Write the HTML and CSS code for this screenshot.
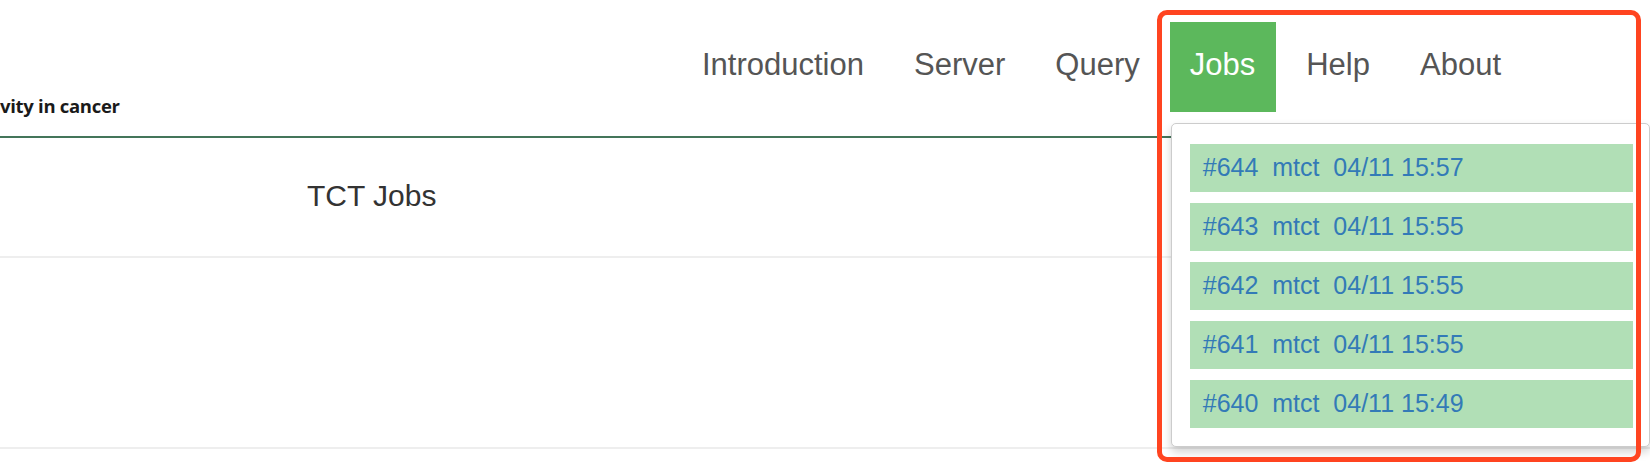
FILE: index.html
```html
<!DOCTYPE html>
<html lang="en">
<head>
<meta charset="utf-8">
<title>TCT Jobs</title>
<link rel="stylesheet" href="styles.css">
</head>
<body>
<header class="topbar">
  <div class="brand">vity in cancer</div>
  <nav class="nav">
    <ul class="nav-list">
      <li class="nav-item"><a class="nav-link" href="#">Introduction</a></li>
      <li class="nav-item"><a class="nav-link" href="#">Server</a></li>
      <li class="nav-item"><a class="nav-link" href="#">Query</a></li>
      <li class="nav-item active">
        <a class="nav-link" href="#">Jobs</a>
        <ul class="dropdown">
          <li class="job"><a href="#">#644&nbsp;&nbsp;mtct&nbsp;&nbsp;04/11 15:57</a></li>
          <li class="job"><a href="#">#643&nbsp;&nbsp;mtct&nbsp;&nbsp;04/11 15:55</a></li>
          <li class="job"><a href="#">#642&nbsp;&nbsp;mtct&nbsp;&nbsp;04/11 15:55</a></li>
          <li class="job"><a href="#">#641&nbsp;&nbsp;mtct&nbsp;&nbsp;04/11 15:55</a></li>
          <li class="job"><a href="#">#640&nbsp;&nbsp;mtct&nbsp;&nbsp;04/11 15:49</a></li>
        </ul>
      </li>
      <li class="nav-item"><a class="nav-link" href="#">Help</a></li>
      <li class="nav-item"><a class="nav-link" href="#">About</a></li>
    </ul>
  </nav>
</header>
<main class="content">
  <div class="row row-head"><span class="title">TCT Jobs</span></div>
  <div class="row row-body"></div>
</main>
<div class="annotation"></div>
</body>
</html>
```

FILE: styles.css
```css
* {
  box-sizing: border-box;
}

html, body {
  margin: 0;
  padding: 0;
  background: #ffffff;
}

body {
  width: 1650px;
  height: 466px;
  overflow: hidden;
  position: relative;
  font-family: "Liberation Sans", Arial, sans-serif;
  color: #333333;
}

.topbar {
  display: flex;
  justify-content: space-between;
  height: 138px;
  border-bottom: 2px solid #44755a;
}

.brand {
  align-self: flex-end;
  font-family: "Open Sans", sans-serif;
  font-weight: 700;
  font-size: 18.5px;
  line-height: 24px;
  padding-bottom: 18px;
  color: #1a1a1a;
  letter-spacing: -0.3px;
}

.nav {
  padding-top: 22px;
  padding-right: 129px;
}

.nav-list {
  list-style: none;
  margin: 0;
  padding: 0;
  display: flex;
  gap: 10px;
}

.nav-item {
  position: relative;
}

.nav-link {
  display: block;
  height: 90px;
  padding: 0 20px 4px;
  line-height: 86px;
  font-size: 31px;
  color: #555555;
  text-decoration: none;
}

.nav-item.active .nav-link {
  background: #5cb85c;
  color: #ffffff;
  padding: 0 21px 4px 20px;
}

.dropdown {
  position: absolute;
  top: 101px;
  left: 1px;
  width: 479px;
  margin: 0;
  padding: 20px 16px 18px 18px;
  list-style: none;
  background: #ffffff;
  border: 1px solid #cccccc;
  border-radius: 5px;
  box-shadow: 0 5px 10px rgba(0, 0, 0, 0.18);
  display: flex;
  flex-direction: column;
  gap: 11px;
  z-index: 5;
}

.job a {
  display: block;
  height: 48px;
  line-height: 46px;
  padding-left: 13px;
  background: #b1dfb6;
  color: #337ab7;
  font-size: 25px;
  text-decoration: none;
  white-space: nowrap;
}

.content {
  display: flex;
  flex-direction: column;
}

.row {
  border-bottom: 2px solid #eeeeee;
}

.row-head {
  height: 120px;
  line-height: 116px;
  padding-left: 307px;
}

.title {
  font-size: 30px;
  color: #333333;
}

.row-body {
  height: 191px;
}

.annotation {
  position: absolute;
  left: 1157px;
  top: 10px;
  width: 484px;
  height: 452px;
  border: 5px solid #ff4420;
  border-radius: 10px;
  z-index: 10;
  pointer-events: none;
}
```
